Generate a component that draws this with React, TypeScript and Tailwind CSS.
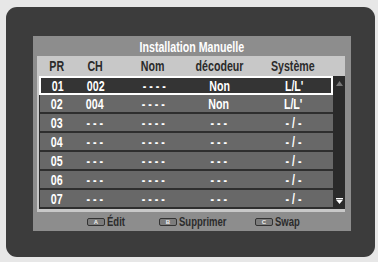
import React from "react";

const font = "font-['Liberation_Sans','Arial',sans-serif]";

const rows = [
  ["01", "002", "- - - -", "Non", "L/L'"],
  ["02", "004", "- - - -", "Non", "L/L'"],
  ["03", "- - -", "- - - -", "- - -", "- / -"],
  ["04", "- - -", "- - - -", "- - -", "- / -"],
  ["05", "- - -", "- - - -", "- - -", "- / -"],
  ["06", "- - -", "- - - -", "- - -", "- / -"],
  ["07", "- - -", "- - - -", "- - -", "- / -"],
];

const cols = "grid grid-cols-[34px_42px_74px_58px_90px]";

function Cell({ children }: { children: React.ReactNode }) {
  return (
    <div className="flex justify-center whitespace-nowrap">
      <span className="inline-block scale-x-[0.76]">{children}</span>
    </div>
  );
}

function Key({ letter }: { letter: string }) {
  return (
    <div className="w-[18px] h-[8px] rounded-[2px] border border-[#333] bg-[#7c7c7c] flex items-center justify-center text-[6px] leading-none text-[#eee]">
      {letter}
    </div>
  );
}

function Label({ w, children }: { w: string; children: React.ReactNode }) {
  return (
    <span className={`${w} whitespace-nowrap`}>
      <span className="inline-block origin-left scale-x-[0.73]">{children}</span>
    </span>
  );
}

export default function App() {
  return (
    <div className={`w-[378px] h-[262px] bg-[#e7e7e7] pt-[7px] pl-[6px] ${font} font-bold`}>
      <div className="w-[369px] h-[250px] rounded-[11px] bg-[#3c3c3c] pt-[29px] pl-[27px]">
        <div className="w-[318px] h-[195px] bg-[#8d8d8d] flex flex-col">
          <div className="h-[20px] flex items-center justify-center text-[14px] text-white leading-none pt-[1px] whitespace-nowrap">
            <span className="inline-block scale-x-[0.76]">Installation Manuelle</span>
          </div>
          <div className="ml-[4px] w-[308px] h-[156px] bg-[#c8c8c8] flex flex-col">
            <div className={`${cols} h-[20px] items-center pl-[3px] text-[14px] text-[#2b2b2b] leading-none`}>
              <Cell>PR</Cell>
              <Cell>CH</Cell>
              <Cell>Nom</Cell>
              <Cell>décodeur</Cell>
              <Cell>Système</Cell>
            </div>
            <div className="flex h-[133px] ml-[2px]">
              <div className="w-[294px] bg-[#2e2e2e] flex flex-col pl-[1px]">
                {rows.map((r, i) => (
                  <div
                    key={i}
                    className={
                      i === 0
                        ? `${cols} h-[19px] items-center bg-[#343434] border-2 border-white text-[14px] text-white leading-none -ml-[1px]`
                        : `${cols} h-[19px] items-center bg-[#686868] border-b-2 border-[#2e2e2e] text-[14px] text-white leading-none`
                    }
                  >
                    {r.map((c, j) => (
                      <Cell key={j}>{c}</Cell>
                    ))}
                  </div>
                ))}
              </div>
              <div className="w-[12px] bg-[#2a2a2a] flex flex-col items-center justify-between py-[5px]">
                <svg width="7" height="5" viewBox="0 0 7 5">
                  <path d="M3.5 0 L7 5 L0 5 Z" fill="#777" />
                </svg>
                <svg width="7" height="6" viewBox="0 0 7 6">
                  <rect x="0" y="0" width="7" height="1.2" fill="#fff" />
                  <path d="M0 1.8 L7 1.8 L3.5 6 Z" fill="#fff" />
                </svg>
              </div>
            </div>
          </div>
          <div className="flex-1 flex items-center pl-[54px] text-[13px] text-[#2b2b2b] leading-none">
            <Key letter="A" />
            <span className="ml-[2px]" />
            <Label w="w-[21px]">Édit</Label>
            <span className="ml-[31px]" />
            <Key letter="B" />
            <span className="ml-[2px]" />
            <Label w="w-[47px]">Supprimer</Label>
            <span className="ml-[29px]" />
            <Key letter="C" />
            <span className="ml-[2px]" />
            <Label w="w-[25px]">Swap</Label>
          </div>
        </div>
      </div>
    </div>
  );
}
